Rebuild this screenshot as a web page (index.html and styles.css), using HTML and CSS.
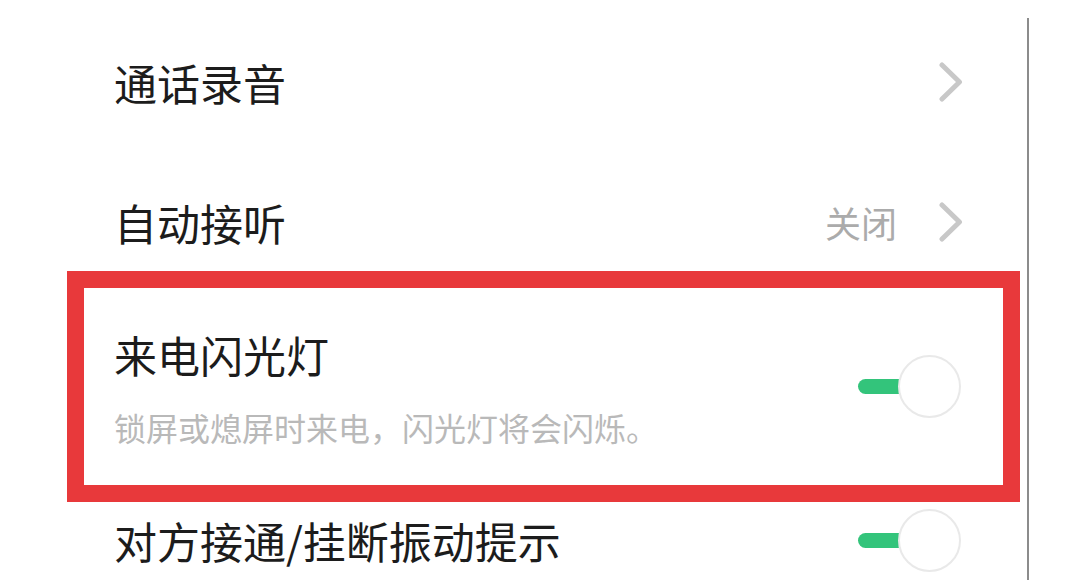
FILE: index.html
```html
<!DOCTYPE html>
<html lang="zh-CN">
<head>
<meta charset="utf-8">
<title>通话设置</title>
<link rel="stylesheet" href="styles.css">
</head>
<body>
<div class="page">
  <div class="list">
    <div class="row row-first">
      <div class="title">通话录音</div>
      <div class="trail">
        <svg class="chev" width="24" height="40" viewBox="0 0 24 40"><polyline points="3,3 20.5,20 3,37" fill="none" stroke="#c8c8c8" stroke-width="5" stroke-linecap="round" stroke-linejoin="round"/></svg>
      </div>
    </div>
    <div class="row row-second">
      <div class="title">自动接听</div>
      <div class="trail">
        <span class="value">关闭</span>
        <svg class="chev" width="24" height="40" viewBox="0 0 24 40"><polyline points="3,3 20.5,20 3,37" fill="none" stroke="#c8c8c8" stroke-width="5" stroke-linecap="round" stroke-linejoin="round"/></svg>
      </div>
    </div>
    <div class="row row-marked">
      <div class="text">
        <div class="title">来电闪光灯</div>
        <div class="sub">锁屏或熄屏时来电，闪光灯将会闪烁。</div>
      </div>
      <div class="switch"><span class="track"></span><span class="knob"></span></div>
    </div>
    <div class="row row-last">
      <div class="title">对方接通/挂断振动提示</div>
      <div class="switch"><span class="track"></span><span class="knob"></span></div>
    </div>
  </div>
</div>
</body>
</html>
```
FILE: styles.css
```css
html, body {
  margin: 0;
  padding: 0;
  background: #ffffff;
}
body {
  width: 1080px;
  height: 580px;
  overflow: hidden;
  font-family: "Noto Sans CJK SC", "Noto Sans", sans-serif;
  color: #1c1c1c;
}
.page {
  display: flex;
}
.list {
  width: 1029px;
  margin-top: 18px;
  border-right: 2px solid #8c8c8c;
  height: 562px;
  box-sizing: border-box;
  overflow: hidden;
}
.row {
  display: flex;
  align-items: center;
  justify-content: space-between;
  box-sizing: border-box;
  padding-left: 114px;
  padding-right: 64px;
}
.title {
  font-size: 43px;
  line-height: 60px;
  white-space: nowrap;
}
.row-first {
  height: 128px;
}
.row-second {
  height: 125px;
  padding-top: 27px;
}
.trail {
  display: flex;
  align-items: center;
  gap: 42px;
}
.value {
  font-size: 36px;
  line-height: 44px;
  color: #ababab;
}
.chev {
  display: block;
}
.row-marked {
  margin-left: 67px;
  width: 953px;
  height: 231px;
  border: 17px solid #e8393b;
  padding-left: 30px;
  padding-right: 42px;
}
.sub {
  font-size: 32px;
  line-height: 44px;
  margin-top: 21px;
  color: #b9b9b9;
  white-space: nowrap;
}
.row-last {
  height: 76px;
  padding-right: 66px;
}
.switch {
  display: flex;
  align-items: center;
}
.track {
  display: block;
  width: 44px;
  height: 15px;
  margin-right: -4px;
  background: #33c47b;
  border-radius: 8px 0 0 8px;
}
.knob {
  display: block;
  position: relative;
  width: 63px;
  height: 63px;
  box-sizing: border-box;
  border-radius: 50%;
  border: 2px solid #e9e9e9;
  background: #ffffff;
}
```
